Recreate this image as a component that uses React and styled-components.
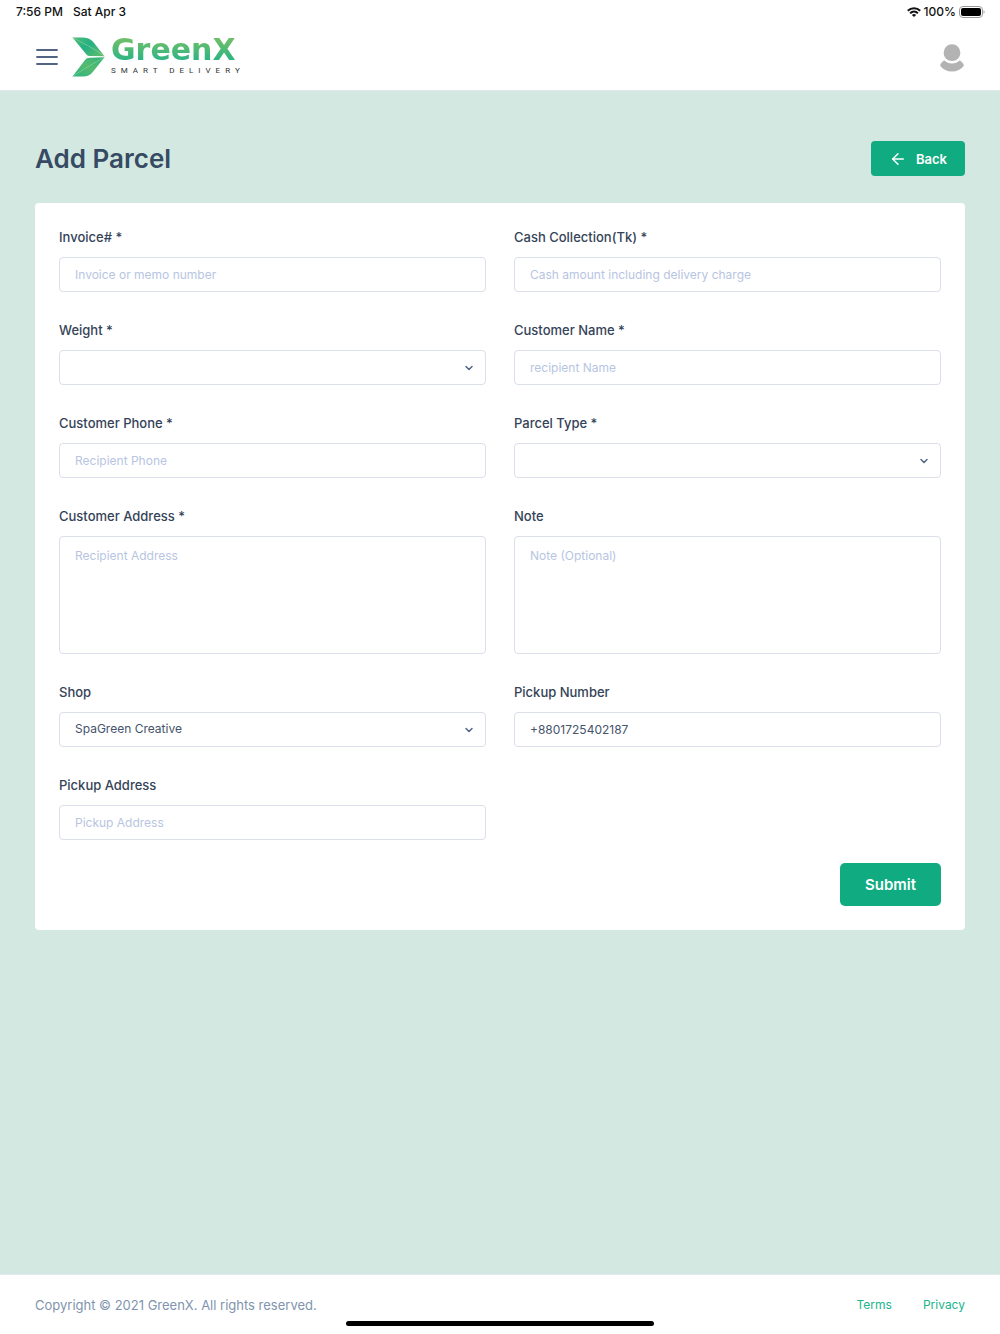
import React from 'react'
import styled, { createGlobalStyle } from 'styled-components'
import { ArrowLeft, ChevronDown } from 'lucide-react'

const GlobalStyle = createGlobalStyle`
	*, *::before, *::after {
		box-sizing: border-box;
	}
	body {
		margin: 0;
		background: #d3e8e1;
		color: #364a63;
		font-family: Inter, 'Open Sans', sans-serif;
		font-size: 13px;
		line-height: 20px;
	}
	button, input, select, textarea {
		font: inherit;
	}
`

const Page = styled.div`
	display: flex;
	flex-direction: column;
	min-height: 100vh;
`

const StatusBar = styled.div`
	display: flex;
	justify-content: space-between;
	align-items: center;
	height: 24px;
	padding: 0 15px 0 16px;
	background: #fff;
	color: #111;
	font-size: 12px;
	font-weight: 500;
`

const StatusGroup = styled.div`
	display: flex;
	align-items: center;
	gap: ${({ $gap }) => $gap};
`

const Header = styled.header`
	display: flex;
	align-items: center;
	justify-content: space-between;
	height: 67px;
	padding: 0 35px 0 36px;
	background: #fff;
	border-bottom: 1px solid #e2e9ee;
`

const Brand = styled.div`
	display: flex;
	align-items: center;
	gap: 14px;
`

const IconButton = styled.button`
	display: flex;
	padding: 0;
	border: 0;
	background: none;
	color: #526484;
	cursor: pointer;
`

const LogoLink = styled.a`
	display: flex;
	align-items: center;
	gap: 6px;
	text-decoration: none;
`

const LogoText = styled.span`
	display: flex;
	flex-direction: column;
`

const Wordmark = styled.span`
	font-family: 'DejaVu Sans', sans-serif;
	font-size: 30px;
	font-weight: 700;
	line-height: 28px;
	color: transparent;
	background: linear-gradient(#6cbe6a 15%, #2db583 85%);
	background-clip: text;
	-webkit-background-clip: text;
`

const Tagline = styled.span`
	font-family: Roboto, sans-serif;
	font-size: 8px;
	line-height: 14px;
	letter-spacing: 5px;
	color: #333;
`

const Main = styled.main`
	flex: 1;
	padding: 50px 35px;
`

const PageHead = styled.div`
	display: flex;
	align-items: center;
	justify-content: space-between;
	margin-bottom: 27px;
`

const Title = styled.h1`
	margin: 0;
	font-size: 26px;
	font-weight: 600;
	line-height: 34px;
`

const Button = styled.button`
	display: flex;
	align-items: center;
	justify-content: center;
	gap: 9px;
	height: ${({ $large }) => ($large ? '43px' : '35px')};
	padding: 0 ${({ $large }) => ($large ? '25px' : '18px')};
	border: 0;
	border-radius: ${({ $large }) => ($large ? '5px' : '4px')};
	background: #10ab80;
	color: #fff;
	font-size: ${({ $large }) => ($large ? '15px' : '13px')};
	font-weight: 600;
	cursor: pointer;
`

const Card = styled.form`
	padding: 24px;
	border-radius: 4px;
	background: #fff;
`

const FieldGrid = styled.div`
	display: grid;
	grid-template-columns: repeat(2, minmax(0, 1fr));
	gap: 28px;
`

const Field = styled.div`
	display: flex;
	flex-direction: column;
	gap: 10px;
`

const Label = styled.label`
	color: #344357;
	font-size: 13px;
	font-weight: 500;
`

const Input = styled.input`
	width: 100%;
	height: 35px;
	padding: 0 15px 1px;
	border: 1px solid #dbdfea;
	border-radius: 4px;
	background: #fff;
	color: #44546c;
	font-size: 12px;
	outline: none;
	&::placeholder {
		color: #b7c5e2;
		opacity: 1;
	}
	&:focus {
		border-color: #10ab80;
	}
`

const TextArea = styled(Input)`
	display: block;
	height: 118px;
	padding: 9px 15px;
	resize: none;
`

const SelectWrap = styled.div`
	position: relative;
	color: #526484;
	svg {
		position: absolute;
		top: 12px;
		right: 11px;
		pointer-events: none;
	}
`

const Select = styled(Input)`
	display: block;
	padding-right: 34px;
	appearance: none;
`

const Actions = styled.div`
	display: flex;
	justify-content: flex-end;
	margin-top: 23px;
`

const Footer = styled.footer`
	display: flex;
	align-items: center;
	justify-content: space-between;
	height: 60px;
	padding: 0 35px;
	border-top: 1px solid #e2e9ee;
	background: #fff;
	color: #8094ae;
`

const FooterNav = styled.nav`
	display: flex;
	gap: 31px;
`

const FooterLink = styled.a`
	color: #20b48b;
	font-size: 12px;
	text-decoration: none;
`

const HomeIndicator = styled.div`
	position: fixed;
	bottom: 8px;
	left: 50%;
	width: 308px;
	height: 5px;
	margin-left: -154px;
	border-radius: 3px;
	background: #000;
`

const WifiIcon = () => (
	<svg width='14' height='10' viewBox='0 0 14 10' fill='none' stroke='#111' strokeWidth='2'>
		<path d='M0.8 3.8 C4.3 0.3 9.7 0.3 13.2 3.8' />
		<path d='M3.1 6.2 C5.4 4 8.6 4 10.9 6.2' />
		<path d='M7 10 L4.9 7.9 C6 6.8 8 6.8 9.1 7.9 Z' fill='#111' stroke='none' />
	</svg>
)

const BatteryIcon = () => (
	<svg width='26' height='12' viewBox='0 0 26 12'>
		<rect x='0.5' y='0.5' width='23' height='11' rx='3.4' fill='none' stroke='#999' />
		<rect x='2' y='2' width='20' height='8' rx='2' fill='#000' />
		<path d='M24.6 4.2 C25.9 4.7 25.9 7.3 24.6 7.8 Z' fill='#999' />
	</svg>
)

const MenuIcon = () => (
	<svg width='22' height='16' viewBox='0 0 22 16' fill='none' stroke='currentColor' strokeWidth='1.8' strokeLinecap='round'>
		<path d='M1 1 H21 M1 8 H21 M1 15 H21' />
	</svg>
)

const LogoMark = () => (
	<svg width='33' height='40' viewBox='0 0 33 40'>
		<defs>
			<linearGradient id='leafTop' x1='0' y1='0' x2='1' y2='0.8'>
				<stop offset='0' stopColor='#4fbb78' />
				<stop offset='0.5' stopColor='#25b083' />
				<stop offset='1' stopColor='#5cbb70' />
			</linearGradient>
			<linearGradient id='leafBottom' x1='0' y1='1' x2='1' y2='0'>
				<stop offset='0' stopColor='#2cb581' />
				<stop offset='0.5' stopColor='#55bb70' />
				<stop offset='1' stopColor='#2fb27e' />
			</linearGradient>
		</defs>
		<path d='M0.5 0.6 C6 0.4 11 0.3 14.5 0.9 C18.5 1.8 20 3.4 22.5 6.4 L32.5 19.2 L17.5 18.9 C15.5 18.8 14.6 17.8 13.4 16.2 Z' fill='url(#leafTop)' />
		<path d='M32.5 20.3 L22 33.5 C18.5 37.8 16.5 39.2 12 39.4 L0.5 39.5 L12.6 23.6 C14.4 21.3 15.2 20.8 17.8 20.7 Z' fill='url(#leafBottom)' />
		<path d='M0.5 0.6 C12 6.5 23 12 32.5 19.2 M32.5 20.3 C22 26 11 32.5 0.5 39.5' fill='none' stroke='#a5dca0' strokeWidth='0.5' />
	</svg>
)

const AvatarIcon = () => (
	<svg width='26' height='30' viewBox='0 -2 26 30' fill='#b3b3b3'>
		<circle cx='13' cy='8.7' r='8.4' />
		<path d='M5.4 16.4 C9.6 20.4 16.4 20.4 20.6 16.4 C22.6 17.2 24.2 18.9 25 21.5 C22 25.5 17.8 27.6 13 27.6 C8.2 27.6 4 25.5 1 21.5 C1.8 18.9 3.4 17.2 5.4 16.4 Z' />
	</svg>
)

const fields = [
	{ id: 'invoice', label: 'Invoice# *', placeholder: 'Invoice or memo number' },
	{ id: 'cash', label: 'Cash Collection(Tk) *', placeholder: 'Cash amount including delivery charge' },
	{ id: 'weight', label: 'Weight *', type: 'select', options: [''] },
	{ id: 'name', label: 'Customer Name *', placeholder: 'recipient Name' },
	{ id: 'phone', label: 'Customer Phone *', placeholder: 'Recipient Phone' },
	{ id: 'parcelType', label: 'Parcel Type *', type: 'select', options: [''] },
	{ id: 'address', label: 'Customer Address *', type: 'textarea', placeholder: 'Recipient Address' },
	{ id: 'note', label: 'Note', type: 'textarea', placeholder: 'Note (Optional)' },
	{ id: 'shop', label: 'Shop', type: 'select', options: ['SpaGreen Creative'] },
	{ id: 'pickupNumber', label: 'Pickup Number', value: '+8801725402187' },
	{ id: 'pickupAddress', label: 'Pickup Address', placeholder: 'Pickup Address' }
]

const FormField = ({ id, label, type, placeholder, value, options }) => (
	<Field>
		<Label htmlFor={id}>{label}</Label>
		{type === 'select' && (
			<SelectWrap>
				<Select as='select' id={id} name={id}>
					{options.map(option => <option key={option}>{option}</option>)}
				</Select>
				<ChevronDown size={12} strokeWidth={3} />
			</SelectWrap>
		)}
		{type === 'textarea' && <TextArea as='textarea' id={id} name={id} placeholder={placeholder} />}
		{!type && <Input type='text' id={id} name={id} placeholder={placeholder} defaultValue={value} />}
	</Field>
)

const App = () => (
	<>
		<GlobalStyle />
		<Page>
			<StatusBar>
				<StatusGroup $gap='10px'>
					<span>7:56 PM</span>
					<span>Sat Apr 3</span>
				</StatusGroup>
				<StatusGroup $gap='3px'>
					<WifiIcon />
					<span>100%</span>
					<BatteryIcon />
				</StatusGroup>
			</StatusBar>
			<Header>
				<Brand>
					<IconButton type='button' aria-label='Menu'><MenuIcon /></IconButton>
					<LogoLink href='#'>
						<LogoMark />
						<LogoText>
							<Wordmark>GreenX</Wordmark>
							<Tagline>SMART DELIVERY</Tagline>
						</LogoText>
					</LogoLink>
				</Brand>
				<IconButton type='button' aria-label='Account'><AvatarIcon /></IconButton>
			</Header>
			<Main>
				<PageHead>
					<Title>Add Parcel</Title>
					<Button type='button'><ArrowLeft size={18} /> Back</Button>
				</PageHead>
				<Card onSubmit={e => e.preventDefault()}>
					<FieldGrid>
						{fields.map(field => <FormField key={field.id} {...field} />)}
					</FieldGrid>
					<Actions>
						<Button type='submit' $large>Submit</Button>
					</Actions>
				</Card>
			</Main>
			<Footer>
				<span>Copyright © 2021 GreenX. All rights reserved.</span>
				<FooterNav>
					<FooterLink href='#'>Terms</FooterLink>
					<FooterLink href='#'>Privacy</FooterLink>
				</FooterNav>
			</Footer>
			<HomeIndicator />
		</Page>
	</>
)

export default App
